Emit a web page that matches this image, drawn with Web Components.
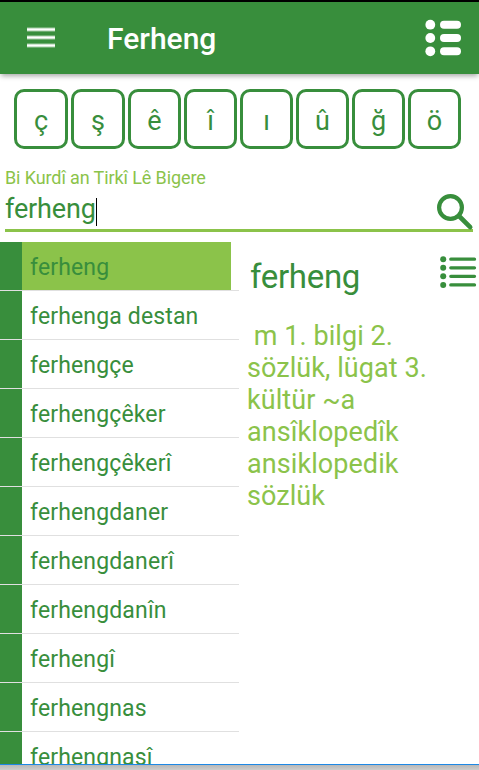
<!DOCTYPE html>
<html lang="ku">
<head>
<meta charset="utf-8">
<meta name="viewport" content="width=device-width, initial-scale=1">
<title>Ferheng</title>
<style>
  html, body {
    margin: 0;
    height: 100%;
  }
  body {
    font-family: Roboto, "Noto Sans", sans-serif;
    color: #388e3c;
    --green: #388e3c;
    --lime: #8bc34a;
    overflow: hidden;
    background: #fff;
  }
</style>
</head>
<body>
<ferheng-app></ferheng-app>

<template id="ferheng-app">
  <style>
    :host {
      display: flex;
      flex-direction: column;
      height: 770px;
      width: 479px;
      background: #fff;
    }
    .keys {
      display: flex;
      gap: 3px;
      padding: 15px 0 0 14px;
    }
    .keys letter-key:nth-child(-n+2) {
      width: 54px;
    }
    main {
      display: flex;
      flex: 1;
      min-height: 0;
      margin-top: 10px;
    }
    .words {
      width: 239px;
      overflow: hidden;
    }
    word-detail {
      flex: 1;
    }
    footer {
      height: 5px;
      border-top: 1px solid #1e88e5;
      background: linear-gradient(#b8b8b8, #cdcdcd);
    }
  </style>
  <app-bar>Ferheng</app-bar>
  <div class="keys">
    <letter-key>ç</letter-key>
    <letter-key>ş</letter-key>
    <letter-key>ê</letter-key>
    <letter-key>î</letter-key>
    <letter-key>ı</letter-key>
    <letter-key>û</letter-key>
    <letter-key>ğ</letter-key>
    <letter-key>ö</letter-key>
  </div>
  <search-field label="Bi Kurdî an Tirkî Lê Bigere">ferheng</search-field>
  <main>
    <div class="words">
      <word-row selected>ferheng</word-row>
      <word-row>ferhenga destan</word-row>
      <word-row>ferhengçe</word-row>
      <word-row>ferhengçêker</word-row>
      <word-row>ferhengçêkerî</word-row>
      <word-row>ferhengdaner</word-row>
      <word-row>ferhengdanerî</word-row>
      <word-row>ferhengdanîn</word-row>
      <word-row>ferhengî</word-row>
      <word-row>ferhengnas</word-row>
      <word-row>ferhengnasî</word-row>
    </div>
    <word-detail>
      <span slot="word">ferheng</span>
      &nbsp;m 1. bilgi 2. sözlük, lügat 3. kültür ~a ansîklopedîk ansiklopedik sözlük
    </word-detail>
  </main>
  <footer></footer>
</template>

<template id="app-bar">
  <style>
    :host {
      display: flex;
      align-items: center;
      box-sizing: border-box;
      height: 74px;
      border-top: 2px solid #000;
      padding: 0 17px 0 27px;
      background: var(--green);
      color: #fff;
      box-shadow: 0 3px 5px -1px rgba(0, 0, 0, .35);
    }
    svg {
      display: block;
    }
    h1 {
      flex: 1;
      margin: 2px 0 0 52px;
      font-size: 30px;
      font-weight: 500;
      line-height: 36px;
    }
  </style>
  <svg width="28" height="22" viewBox="0 0 28 22">
    <path d="M0 2.5h28M0 10.5h28M0 18.5h28" stroke="#fff" stroke-opacity=".55" stroke-width="4"/>
    <path d="M0 2.5h28M0 10.5h28M0 18.5h28" stroke="#fff" stroke-width="2"/>
  </svg>
  <h1><slot></slot></h1>
  <svg width="37" height="38" viewBox="0 0 37 38" fill="#fff">
    <circle cx="5.3" cy="5.7" r="4.9"/>
    <circle cx="5.3" cy="19" r="4.9"/>
    <circle cx="5.3" cy="32.3" r="4.9"/>
    <rect x="15" y="1.8" width="21" height="8" rx="4"/>
    <rect x="15" y="15.1" width="21" height="8" rx="4"/>
    <rect x="15" y="28.3" width="21" height="8" rx="4"/>
  </svg>
</template>

<template id="letter-key">
  <style>
    :host {
      display: block;
      box-sizing: border-box;
      width: 53px;
      height: 60px;
      border: 3px solid var(--green);
      border-radius: 10px;
      font-size: 27px;
      line-height: 58px;
      text-align: center;
    }
  </style>
  <slot></slot>
</template>

<template id="search-field">
  <style>
    :host {
      display: block;
      box-sizing: border-box;
      height: 83px;
      margin: 0 6px 0 5px;
      padding-top: 18px;
      border-bottom: 3px solid var(--lime);
      color: var(--green);
    }
    .label {
      color: var(--lime);
      font-size: 18px;
      letter-spacing: -.11px;
      line-height: 22px;
    }
    .row {
      display: flex;
      justify-content: space-between;
    }
    .value {
      display: flex;
      font-size: 27px;
      letter-spacing: -.16px;
      line-height: 40px;
    }
    .caret {
      width: 1px;
      height: 28px;
      margin-top: 9px;
      background: #000;
    }
    svg {
      display: block;
      margin-top: 5px;
      overflow: visible;
    }
  </style>
  <div class="label"></div>
  <div class="row">
    <div class="value"><slot></slot><span class="caret"></span></div>
    <svg width="36" height="36" viewBox="0 0 36 36" fill="none" stroke="currentColor">
      <circle cx="13.5" cy="13.5" r="11.4" stroke-width="4.2"/>
      <path d="M22 22L33.2 33.2" stroke-width="4.6" stroke-linecap="round"/>
    </svg>
  </div>
</template>

<template id="word-row">
  <style>
    :host {
      display: flex;
      box-sizing: border-box;
      height: 49px;
      border-bottom: 1px solid #e0e0e0;
      font-size: 23px;
      letter-spacing: .15px;
      line-height: 52px;
    }
    .mark {
      width: 22px;
      background: var(--green);
    }
    .text {
      flex: 1;
      margin-right: 8px;
      padding-left: 8px;
      white-space: nowrap;
    }
    :host([selected]) .text {
      background: var(--lime);
    }
  </style>
  <div class="mark"></div>
  <div class="text"><slot></slot></div>
</template>

<template id="word-detail">
  <style>
    :host {
      display: block;
      padding: 0 2px 0 8px;
    }
    header {
      display: flex;
      justify-content: space-between;
      padding-left: 3px;
      font-size: 33px;
      letter-spacing: -.3px;
      line-height: 70px;
    }
    svg {
      display: block;
      margin-top: 14px;
    }
    .text {
      width: 190px;
      margin-top: 8px;
      color: var(--lime);
      font-size: 27px;
      letter-spacing: .07px;
      line-height: 32px;
    }
  </style>
  <header>
    <slot name="word"></slot>
    <svg width="37" height="33" viewBox="0 0 37 33" fill="currentColor">
      <circle cx="3.2" cy="3.2" r="3"/>
      <circle cx="3.2" cy="11.8" r="3"/>
      <circle cx="3.2" cy="20.3" r="3"/>
      <circle cx="3.2" cy="28.9" r="3"/>
      <path d="M10.8 3.2h23.7M10.8 11.8h23.7M10.8 20.3h23.7M10.8 28.9h23.7" stroke="currentColor" stroke-width="3.3" stroke-linecap="round"/>
    </svg>
  </header>
  <div class="text"><slot></slot></div>
</template>

<script>
  !function(){
    class TemplateElement extends HTMLElement {
      constructor() {
        super();
        this.attachShadow({ mode: 'open' });
        const template = document.getElementById(this.localName);
        this.shadowRoot.appendChild(template.content.cloneNode(true));
      }
    }

    customElements.define('app-bar', class extends TemplateElement {});
    customElements.define('letter-key', class extends TemplateElement {});
    customElements.define('word-row', class extends TemplateElement {});
    customElements.define('word-detail', class extends TemplateElement {});

    customElements.define('search-field',
      class extends TemplateElement {
        static get observedAttributes() {return ['label']; }

        attributeChangedCallback(name, oldVal, newVal) {
          this.shadowRoot.querySelector('.label').textContent = newVal;
        }
      }
    );

    customElements.define('ferheng-app', class extends TemplateElement {});
  }();
</script>
</body>
</html>
